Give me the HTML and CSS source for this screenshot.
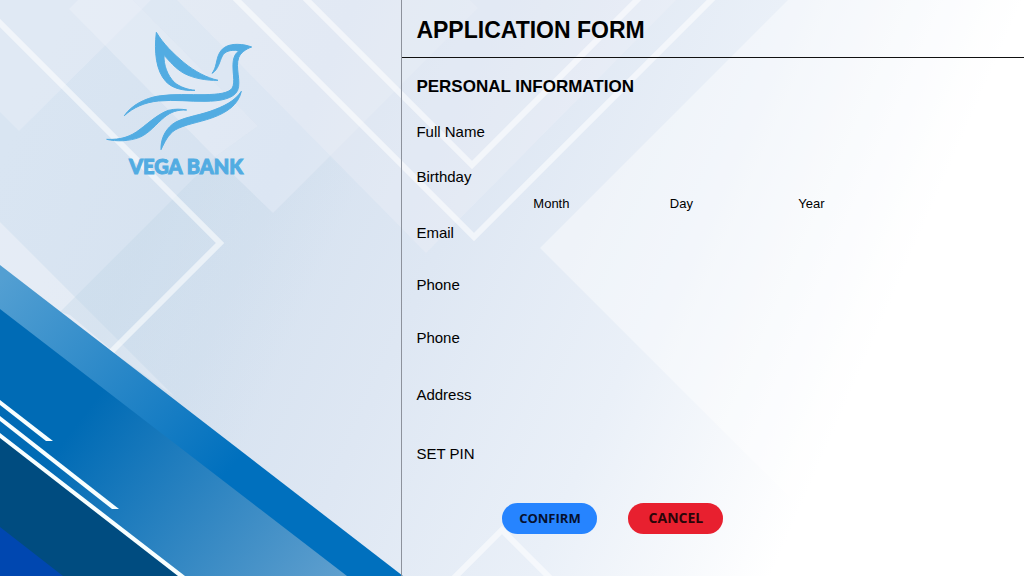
FILE: index.html
```html
<!DOCTYPE html>
<html lang="en">
<head>
<meta charset="utf-8">
<meta name="viewport" content="width=device-width, initial-scale=1">
<title>Vega Bank - Application Form</title>
<link rel="stylesheet" href="styles.css">
</head>
<body>
<div class="page">
  <svg class="backdrop" viewBox="0 0 1024 576" preserveAspectRatio="none" aria-hidden="true">
    <defs>
      <linearGradient id="base" gradientUnits="userSpaceOnUse" x1="0" y1="160" x2="800" y2="510">
        <stop offset="0" stop-color="#d9e5f2"/>
        <stop offset="0.3" stop-color="#d6e2f0"/>
        <stop offset="0.5" stop-color="#dee7f3"/>
        <stop offset="0.75" stop-color="#eaf0f8"/>
        <stop offset="1" stop-color="#ffffff"/>
      </linearGradient>
      <linearGradient id="shade" gradientUnits="userSpaceOnUse" x1="140" y1="250" x2="300" y2="320">
        <stop offset="0" stop-color="#bfd5e6" stop-opacity="0.35"/>
        <stop offset="1" stop-color="#bfd5e6" stop-opacity="0"/>
      </linearGradient>
      <linearGradient id="band" gradientUnits="userSpaceOnUse" x1="0" y1="280" x2="220" y2="480">
        <stop offset="0" stop-color="#539fd2"/>
        <stop offset="1" stop-color="#0070be"/>
      </linearGradient>
      <linearGradient id="wedge" gradientUnits="userSpaceOnUse" x1="80" y1="420" x2="330" y2="610">
        <stop offset="0" stop-color="#006bb5"/>
        <stop offset="1" stop-color="#62a1cf"/>
      </linearGradient>
    </defs>
    <rect width="1024" height="576" fill="url(#base)"/>
    <g fill="#f1f3fa">
      <path d="M0 0H151L19 131L0 112Z" opacity="0.3"/>
      <path d="M78 0H133L258 126L215 157L69 9Z" opacity="0.4"/>
      <path d="M177 0H470L478 8L273 213L215 157L258 126L133 0Z" opacity="0.25"/>
      <path d="M177 0H676L426 253Z" opacity="0.3"/>
      <path d="M0 222L175 397L0 270Z" opacity="0.5"/>
    </g>
    <path d="M215 157L273 213L330 157L402 228V576H380L70 315L60 312Z" fill="url(#shade)"/>
    <path d="M788 0H1024V576H868L540 248Z" fill="#ffffff" opacity="0.4"/>
    <g fill="none" stroke="#ffffff" stroke-width="6" stroke-opacity="0.55">
      <path d="M-4 19L220 243L108 355"/>
      <path d="M233 -4L474 237L715 -4"/>
      <path d="M303 -4L472 165L641 -4"/>
      <path d="M452 580L502 530L552 580"/>
    </g>
    <path d="M0 265L403 576H0Z" fill="url(#band)"/>
    <path d="M0 309L347 576H0Z" fill="url(#wedge)"/>
    <path d="M0 436L180 576H0Z" fill="#004c80"/>
    <path d="M0 527L63 576H0Z" fill="#0047b0"/>
    <g fill="#f8ffff">
      <path d="M0 400L53 441H46L0 405Z"/>
      <path d="M0 416L119 509H112L0 421Z"/>
      <path d="M0 433L185 576H178L0 438Z"/>
    </g>
  </svg>

  <aside class="brand">
    <svg class="brand-bird" viewBox="45 33 444 360" role="img" aria-label="Dove">
      <g fill="#52ace2" stroke="#52ace2" stroke-width="3">
        <path d="M199 37C220 72 250 101 282 128C315 155 350 173 384 181C350 182 310 175 282 160C255 145 240 124 222 106C221 135 232 166 253 187C270 202 295 209 315 211C280 213 247 205 228 185C198 153 192 95 199 37Z"/>
        <path d="M366 160C380 144 378 118 388 100C398 80 418 73 442 73C460 73 474 77 485 81C468 87 452 98 446 113C435 143 454 183 443 211C432 236 390 244 345 244C300 245 255 238 205 243C165 247 130 262 103 287C125 255 165 235 205 228C250 221 300 225 345 224C385 223 415 220 426 205C438 188 425 150 430 122C432 109 437 99 447 92C420 88 404 95 397 108C388 125 386 148 366 160Z"/>
        <path d="M454 214C445 255 410 278 365 294C325 308 285 313 255 330C234 344 224 366 213 389C212 362 222 333 247 313C275 292 320 288 360 274C400 260 434 244 454 214Z"/>
        <path d="M50 358C92 360 122 350 150 328C180 305 205 282 235 271C255 266 275 267 290 270C262 269 242 276 224 291C199 311 179 339 149 352C117 364 80 365 50 358Z"/>
      </g>
    </svg>
    <p class="brand-name">VEGA BANK</p>
  </aside>

  <main class="application">
    <header class="application-header">
      <h1>APPLICATION FORM</h1>
    </header>
    <form class="form">
      <h2>PERSONAL INFORMATION</h2>
      <div class="fields">
        <label for="full-name">Full Name</label>
        <input class="wide" id="full-name" type="text">

        <span class="group-label" id="birthday">Birthday</span>
        <input id="month" type="text" aria-describedby="birthday">
        <input id="day" type="text" aria-describedby="birthday">
        <input id="year" type="text" aria-describedby="birthday">
        <label class="caption month" for="month">Month</label>
        <label class="caption" for="day">Day</label>
        <label class="caption" for="year">Year</label>

        <label for="email">Email</label>
        <input class="wide" id="email" type="email">
        <label for="phone-1">Phone</label>
        <input class="wide" id="phone-1" type="tel">
        <label for="phone-2">Phone</label>
        <input class="wide" id="phone-2" type="tel">
        <label for="address">Address</label>
        <input class="wide" id="address" type="text">
        <label for="pin">SET PIN</label>
        <input class="wide" id="pin" type="password">
      </div>
      <div class="actions">
        <button class="button confirm" type="submit">CONFIRM</button>
        <button class="button cancel" type="reset">CANCEL</button>
      </div>
    </form>
  </main>
</div>
</body>
</html>
```
FILE: styles.css
```css
* {
  box-sizing: border-box;
}

body {
  margin: 0;
  color: #000;
  font-family: "Liberation Sans", Arial, sans-serif;
}

.page {
  position: relative;
  display: flex;
  min-height: 100vh;
}

.backdrop {
  position: absolute;
  inset: 0;
  z-index: -1;
  width: 100%;
  height: 100%;
}

.brand {
  flex: 0 0 39.2%;
  padding: 31px 0 0 105px;
}

.brand-bird {
  display: block;
  width: 148px;
  height: 120px;
}

.brand-name {
  margin: 2px 0 0 24px;
  color: #52ace2;
  font-family: Lato, sans-serif;
  font-size: 20px;
  font-weight: 900;
  line-height: 26px;
  -webkit-text-stroke: 1px #52ace2;
}

.application {
  flex: 1;
  border-left: 1px solid #8d929c;
}

.application-header {
  padding: 16px 14px 13px;
  border-bottom: 1px solid #111;
}

h1 {
  margin: 0;
  font-size: 23px;
  line-height: 28px;
}

.form {
  padding: 19px 14px;
}

h2 {
  margin: 0;
  font-size: 17px;
  line-height: 20px;
}

.fields {
  display: grid;
  grid-template-columns: 70px repeat(3, minmax(0, 130px));
  grid-template-rows: 45px 27px 29px 52px 53px 57px 59px 59px;
  padding-top: 25px;
  align-items: start;
  font-size: 15px;
  line-height: 20px;
}

.fields input {
  width: 100%;
  height: 20px;
  padding: 0 8px;
  border: 0;
  background: transparent;
  font: inherit;
}

.fields .wide {
  grid-column: 2 / -1;
}

.fields .caption {
  font-size: 13px;
  text-align: center;
}

.fields .month {
  grid-column: 2;
}

.actions {
  display: flex;
  gap: 31px;
  padding-left: 86px;
}

.button {
  width: 95px;
  height: 31px;
  padding: 0 0 2px;
  border: 0;
  border-radius: 16px;
  font-family: "Open Sans", sans-serif;
  font-size: 13px;
  font-weight: 700;
}

.confirm {
  background: #2684ff;
  color: #06102e;
}

.cancel {
  background: #e8202f;
  color: #2a0508;
  font-size: 14px;
}
```
